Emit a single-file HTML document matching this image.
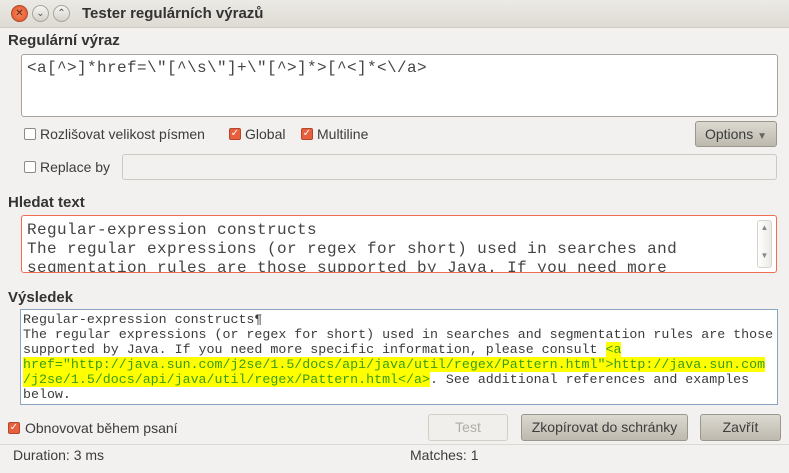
<!DOCTYPE html><html><head><meta charset="utf-8"><style>
*{box-sizing:border-box;margin:0;padding:0}
body{width:789px;height:473px;background:#f2f1ef;font-family:"Liberation Sans",sans-serif;font-size:14px;color:#3c3c3c;position:relative;overflow:hidden}
.a{position:absolute}
.title{left:0;top:0;width:789px;height:28px;background:linear-gradient(#eceae5,#dedbd4);border-bottom:1px solid #cfccc4}
.tb{width:17px;height:17px;border-radius:50%;top:5px;border:1px solid #a9a59c;background:linear-gradient(#f6f5f2,#d5d2ca);font-size:10px;text-align:center;line-height:15px;color:#555}
.b{font-weight:bold;font-size:15px;color:#333}
.box{background:#fff;border:1px solid #a8a49b;border-radius:3px}
.mono{font-family:"Liberation Mono",monospace;color:#444}
.cb{width:12px;height:12px;border:1px solid #8f8b82;border-radius:2px;background:#fff}
.cb.on{background:#e85f3d;border-color:#b4462b;color:#fff;font-size:10px;line-height:10px;text-align:center}
.btn{border:1px solid #9c978c;border-radius:3px;background:linear-gradient(#dcd9d1,#bdb9ae);text-align:center;line-height:24px;color:#3c3c3c}
.hl{background:#ffff00;color:#3a9c12}
</style></head><body>
<div class="a title"></div>
<div class="a tb" style="left:11px;background:radial-gradient(#f58a5a,#e0512a);border-color:#b24a2a;color:#5a2010">✕</div>
<div class="a tb" style="left:32px">⌄</div>
<div class="a tb" style="left:53px">⌃</div>
<div class="a b" style="left:82px;top:5px;font-size:15px">Tester regulárních výrazů</div>

<div class="a b" style="left:8px;top:32px">Regulární výraz</div>
<div class="a box" style="left:21px;top:54px;width:757px;height:63px"></div>
<div class="a mono" style="left:27px;top:59px;font-size:16px;letter-spacing:0.4px">&lt;a[^&gt;]*href=\"[^\s\"]+\"[^&gt;]*&gt;[^&lt;]*&lt;\/a&gt;</div>

<div class="a cb" style="left:24px;top:128px"></div>
<div class="a" style="left:40px;top:126px">Rozlišovat velikost písmen</div>
<div class="a cb on" style="left:229px;top:128px">✓</div>
<div class="a" style="left:245px;top:126px">Global</div>
<div class="a cb on" style="left:301px;top:128px">✓</div>
<div class="a" style="left:317px;top:126px">Multiline</div>
<div class="a btn" style="left:695px;top:121px;width:82px;height:26px">Options <span style="font-size:10px;color:#666">▼</span></div>

<div class="a cb" style="left:24px;top:161px"></div>
<div class="a" style="left:40px;top:159px">Replace by</div>
<div class="a" style="left:122px;top:154px;width:655px;height:26px;border:1px solid #cdc9c0;border-radius:3px;background:#f2f1ef"></div>

<div class="a b" style="left:8px;top:194px">Hledat text</div>
<div class="a" style="left:21px;top:215px;width:756px;height:58px;background:#fff;border:1px solid #ef6d52;border-radius:3px;overflow:hidden">
<div class="mono" style="position:absolute;left:5px;top:5px;font-size:16px;letter-spacing:0.4px;line-height:19px;white-space:pre">Regular-expression constructs
The regular expressions (or regex for short) used in searches and
segmentation rules are those supported by Java. If you need more</div>
<div style="position:absolute;right:4px;top:4px;width:15px;height:48px;border:1px solid #d6d3cc;border-radius:3px;background:linear-gradient(90deg,#fff,#eceae5);font-size:8px;color:#888;text-align:center"><div style="margin-top:2px">▲</div><div style="margin-top:19px">▼</div></div>
</div>

<div class="a b" style="left:8px;top:289px">Výsledek</div>
<div class="a" style="left:20px;top:309px;width:758px;height:96px;background:#fff;border:1px solid #8aa4c4"></div>
<div class="a mono" style="left:23px;top:312px;font-size:13.3px;letter-spacing:0;line-height:15px;white-space:pre;color:#3c3c3c">Regular-expression constructs¶
The regular expressions (or regex for short) used in searches and segmentation rules are those
supported by Java. If you need more specific information, please consult <span class="hl">&lt;a</span>
<span class="hl">href="http://java.sun.com/j2se/1.5/docs/api/java/util/regex/Pattern.html"&gt;http://java.sun.com</span>
<span class="hl">/j2se/1.5/docs/api/java/util/regex/Pattern.html&lt;/a&gt;</span>. See additional references and examples
below.</div>

<div class="a cb on" style="left:8px;top:422px">✓</div>
<div class="a" style="left:25px;top:420px">Obnovovat během psaní</div>
<div class="a btn" style="left:428px;top:414px;width:80px;height:27px;background:#f0efec;border-color:#d2cec6;color:#b0ada6">Test</div>
<div class="a btn" style="left:521px;top:414px;width:167px;height:27px">Zkopírovat do schránky</div>
<div class="a btn" style="left:700px;top:414px;width:81px;height:27px">Zavřít</div>

<div class="a" style="left:0;top:444px;width:789px;height:1px;background:#dcd9d2"></div>
<div class="a" style="left:13px;top:447px">Duration: 3 ms</div>
<div class="a" style="left:410px;top:447px">Matches: 1</div>
</body></html>
